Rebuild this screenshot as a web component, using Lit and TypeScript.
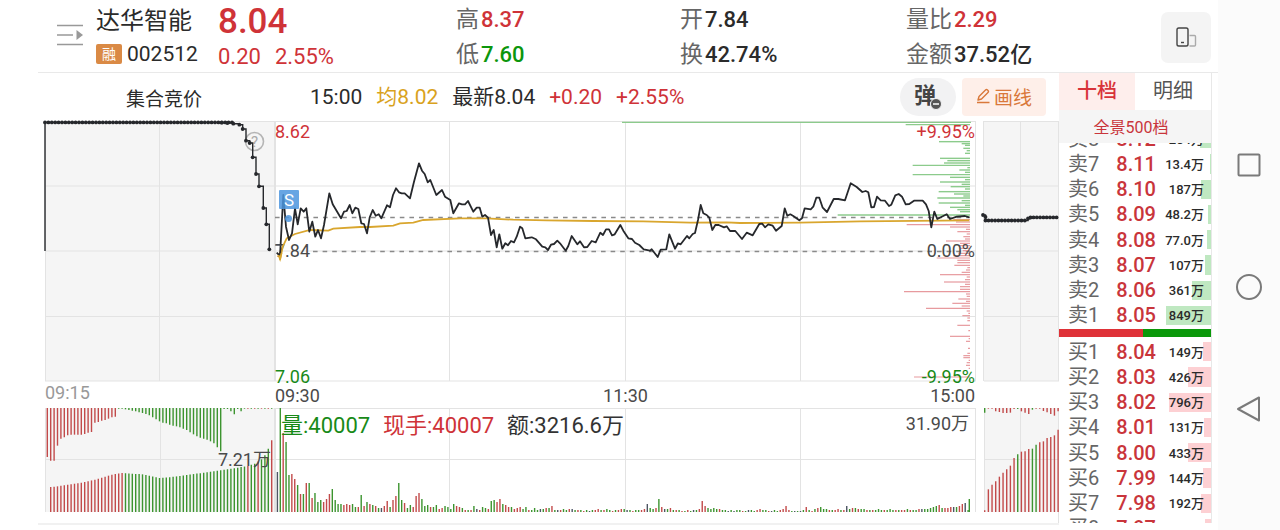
import { LitElement, html, svg, css } from "lit";
import { customElement, property, state } from "lit/decorators.js";
import { classMap } from "lit/directives/class-map.js";

type Point = [number, number];

/* The traces are sampled at three units per pixel from the plot's origin. */
const UNIT = 3;
const toPoints = (flat: number[], shift = 0, ox = 260, oy = 110): Point[] => {
  const out: Point[] = [];
  for (let i = 0; i < flat.length; i += 2) out.push([ox + (flat[i] + shift) / UNIT, oy + flat[i + 1] / UNIT]);
  return out;
};
const join = (pts: Point[]) => pts.map(([x, y]) => `${x.toFixed(1)},${y.toFixed(1)}`).join(" ");

const MORNING_A = [50,428,60,438,70,255,78,350,87,390,96,370,105,295,113,343,122,295,131,305,139,295,148,365,157,335,166,380,174,360,183,385,192,345,208,250,218,283,243,325,252,305,260,303,269,285,277,310,286,293,295,297,304,340,312,342,321,370,329,322,338,300,347,317,356,313,364,325,381,286,390,292,399,255,408,235,417,247,425,250,434,250,450,265,462,215,477,160,486,182,494,192,503,217,511,210,529,255,546,240,555,260,571,270,580,310,597,280,606,283,615,283,624,273,640,305,650,293,659,293,667,320,675,315,684,323];
const MORNING_B = [33,375,41,360,50,412,58,373,67,416,76,400,84,406,93,393,102,397,110,380,120,350,127,355,136,385,155,382,168,388,187,410,196,412,204,420,213,404,222,402,232,392,240,400,257,422,265,408,275,378,292,403,300,394,312,412,322,411,335,393,347,397,361,368,369,375,378,358,387,358,396,376,404,373,421,345,430,362,445,385,456,387,465,398,478,405,491,418,510,422,515,418,533,441,542,419,559,418,568,373,585,416,594,400,602,403,621,378,628,385,638,372,645,369,654,330,662,285,670,310,680,315,688,323,697,360,706,345,716,345];
const AFTERNOON = [12,352,20,349,30,363,46,363,66,387,80,368,98,376,118,342,127,341,135,352,145,343,158,347,168,362,185,348,194,295,202,317,211,313,220,318,238,331,246,325,254,295,272,298,280,290,289,263,298,263,308,293,321,306,341,267,355,267,375,271,392,220,410,231,427,246,437,243,445,247,454,292,462,291,471,260,482,271,495,272,507,288,514,284,526,256,536,252,546,260,557,283,568,282,582,272,608,272,618,283,626,303,634,352,643,305,652,327,680,313,690,327,710,320,735,318,748,322];
const PRICE = [...toPoints(MORNING_A), ...toPoints(MORNING_B, 660), ...toPoints(AFTERNOON, 1380)];

const AVERAGE = toPoints([60,450,68,410,80,385,105,372,150,360,205,362,220,356,300,351,330,351,400,347,420,340,460,338,490,330,600,325,680,325,760,329,860,331,1000,333,1150,334,1290,338,1400,337,1440,339,1620,338,1800,334,2128,331]);

const AUCTION_DROP = toPoints([575,38,592,39,610,41,628,44,638,57,648,92,659,99,668,142,678,192,687,229,700,294,709,343,718,418], 0, 30, 110);
const AUCTION: Point[] = [...Array.from({ length: 56 }, (_, i): Point => [45 + i * 3.4, 122.4]), ...AUCTION_DROP];

const CLOSING: Point[] = [[983, 215], [985.5, 217], [985.5, 220.5],
  ...Array.from({ length: 12 }, (_, i): Point => [988.5 + i * 3.3, 220.5]),
  [1028, 218.5], [1030.5, 217.5],
  ...Array.from({ length: 8 }, (_, i): Point => [1033.5 + i * 3.3, 217.4])];

const stepPath = (pts: Point[]) =>
  pts.slice(1).reduce((d, [x, y]) => `${d}H${x.toFixed(1)}V${y.toFixed(1)}`, `M${pts[0][0]} ${pts[0][1]}`);

/* Price distribution: row, left end. */
const CHIPS_UP = [44,557,95,657,101,725,106,735,115,730,122,740,130,735,145,660,152,682,159,672,166,578,173,742,180,718,187,735,194,578,202,690,209,735,216,660,223,725,230,692,237,735,245,656,252,702,258,730,264,652,272,725,279,656,286,735,292,690,299,712,305,720,315,353];
const CHIPS_DOWN = [329,700,336,708,344,560,351,690,358,738,365,712,372,740,380,730,387,735,393,678,400,720,407,715,415,722,422,728,430,715,437,700,444,650,451,712,458,712,466,703,473,742,480,738,487,725,494,660,501,740,509,735,516,672,523,735,530,720,538,720,545,552,552,738,559,740,567,715,574,738,580,697,588,725,595,618,603,740,610,745,617,727,624,742,632,742,646,712,662,745,679,690,686,746,694,738,715,744,730,742,737,730,743,730,751,746,758,740,766,738,775,746,801,582];

/* Minute volumes; the letter is the direction (g fall, r rise, k flat). */
const VOLUME = (
  "40k 104g 79r 70g 37g 38r 33r 27g 18r 18g 29r 29g 14r 19g 10g 12g 10r 13r 18r 23g 12g 8g 8g 7r 8r 7r 8g 5g 5r 17g 6r 10g 8r 7g 6r 4g 4k 6r 11r 5g 12r 16r 29g 12g 9r 4g 7g 5r 16r 19r 13g 6g 7g 5r 5g 7g 3r 4r 6g 5g 3g 8g 6r 5r 4g 2r 2g 2r 6g 3k 2r 5g 4g 3r 11g 12g 10r 13r 8g 7r 5r 5g 3r 4r 5r 3g 5g 2r 2g 4g 2g 3k 3g 4r 4g 6r 2g " +
  "2k 2r 3g 2g 3r 3k 2g 2r 2g 1r 2g 1k 2g 2r 3r 2g 2r 3g 2g 1r 2g 2r 3r 3g 2k 2g 1r 2g 2g 2r 3r 8k 4g 3g 4r 13g 5r 3k 3g 4r 2g 2r 2g 1r 1g 2r 1g 2k 2g 3r 11r 6r 4g 3g 4g 3g 3r 2g 2g 1k 2g 1k 2g 2g 1r 1g 2k 2g 1g 2r 3r 2g 2g 1r 1k 2g 1g 2r 3r 6r 2r 1g 1k 1g 1k 2g 5r 2g 1r 3g 4r 5g 3g 3g 2r 2g 2r 3r 2g 2r 6k 3g 4r 4g 3r 3g 3g 2r 2g 2r 2g 3g 2g 2r 2g 3g 2g 2r 2g 2r 2r 3g 2r 2g 2g 3r 3k 3g 3g 4g 5g 6g 7r 4g 4r 4r 5r 5k 5g 6r 8r 9k 2g"
).trim().split(" ").map((v) => ({ size: parseInt(v, 10), dir: v.slice(-1) }));

const AUCTION_TOP = [147,158,158,113,92,88,82,80,80,80,80,78,74,72,44,42,38,36,32,28,26,2,2,4,6,8,10,13,15,18,22,28,34,40,44,46,50,53,55,58,62,66,73,79,85,89,92,95,100,106,118,130,3,3,10,19,3,10,2,2,2,2,2,2,2,2,2];
const AUCTION_KEYS: Point[] = [[1, 75], [3, 77], [10, 88], [14, 97], [19, 112], [22, 117], [28, 113], [33, 102], [36, 104], [51, 125], [59, 138], [61, 145], [63, 158], [64, 170], [65, 190], [66, 215]];
const auctionSize = (i: number) => {
  const k = Math.max(1, AUCTION_KEYS.findIndex(([x]) => x >= i));
  const [x0, y0] = AUCTION_KEYS[k - 1];
  const [x1, y1] = AUCTION_KEYS[k];
  return y0 + ((i - x0) / (x1 - x0)) * (y1 - y0);
};
const CLOSE_TOP = [14,2,2,10,12,15,15,14,3,3,10,14,18,5,2,2,9,13,18,23,10];
const CLOSE_SIZE = [5,68,82,92,106,118,128,139,162,173,181,182,189,190,202,209,212,222,225,230,247];

@customElement("minute-chart")
export class MinuteChart extends LitElement {
  static styles = css`
    :host { display: block; }
    svg { display: block; width: 100%; height: auto; }
    text { font: 18px Roboto, "Noto Sans CJK SC", sans-serif; fill: #4a4a4a; }
    .end { text-anchor: end; }
    .mid { text-anchor: middle; }
    .muted { fill: #999; }
    .up { fill: #cf3338; }
    .down { fill: #188a18; }
    .legend { font-size: 22px; }
    .dark { fill: #333; }
    .side { fill: #f5f5f5; }
    .grid { stroke: #e3e3e3; fill: none; }
    .ref { stroke: #8a8a8a; stroke-width: 1.4; stroke-dasharray: 4.6 5; }
    .price { fill: none; stroke: #26282c; stroke-width: 1.8; stroke-linejoin: round; }
    .step { fill: none; stroke: #26282c; stroke-width: 1.4; }
    .avg { fill: none; stroke: #d9a62e; stroke-width: 1.8; }
    .dot { fill: #26282c; }
    .g { stroke: #3c942f; }
    .r { stroke: #c24a4a; }
    .k { stroke: #4d5563; }
    .bars { stroke-width: 1.4; }
    .chip-up { stroke: #8ccb8c; stroke-width: 1.4; }
    .chip-down { stroke: #e79a9e; stroke-width: 1.2; }
    .help { fill: none; stroke: #b5b5b5; stroke-width: 1.6; }
    .help-mark { font-size: 15px; fill: #aaa; }
    .sell { fill: #4c95de; fill-opacity: 0.85; }
    .sell-mark { font-size: 17px; fill: #fff; }
  `;

  private vbar(x: number, from: number, to: number, kind: string) {
    return svg`<line class=${kind} x1=${x} x2=${x} y1=${from} y2=${to}></line>`;
  }

  private chips(rows: number[], kind: string) {
    const out = [];
    for (let i = 0; i < rows.length; i += 2) {
      const y = 110 + rows[i] / UNIT;
      out.push(svg`<line class=${kind} x1=${720 + rows[i + 1] / UNIT} x2="970" y1=${y} y2=${y}></line>`);
    }
    return out;
  }

  render() {
    const base = 512;
    return html`
      <svg viewBox="38 118 1021 405" role="img" aria-label="分时走势">
        <rect class="side" x="45" y="121" width="230" height="260"></rect>
        <rect class="side" x="45" y="408" width="230" height="104"></rect>
        <rect class="side" x="984" y="121" width="75" height="260"></rect>
        <rect class="side" x="984" y="408" width="75" height="104"></rect>
        <path class="grid" d="M45 121.5H976M45 186H976M45 251H976M45 316.5H976M45 381H976
          M45.5 121V381M159.5 121V381M274.5 121V381M275.5 121V381M449.5 121V381M625.5 121V381M800.5 121V381M975.5 121V381
          M984 121.5H1059M984 186H1059M984 251H1059M984 316.5H1059M984 381H1059M983.5 121V381M1020.5 121V381M1058.5 121V381
          M276 408.5H976M45 459.5H976M984 459.5H1059
          M45.5 408V512M160.5 408V512M274.5 408V512M275.5 408V512M449.5 408V512M625.5 408V512M800.5 408V512M975.5 408V512
          M984.5 408V512M1020.5 408V512M1058.5 408V523"></path>

        <line class="ref" x1="275" x2="970" y1="217.5" y2="217.5"></line>
        <line class="ref" x1="313" x2="970" y1="251.5" y2="251.5"></line>
        <line class="chip-up" x1="622" x2="971" y1="122.4" y2="122.4"></line>
        ${this.chips(CHIPS_UP, "chip-up")}
        ${this.chips(CHIPS_DOWN, "chip-down")}

        <circle class="help" cx="254.500" cy="141.500" r="9"></circle>
        <text class="mid help-mark" x="254.500" y="147">?</text>

        <text class="up" x="275" y="138">8.62</text>
        <text x="275" y="257">7.84</text>
        <text class="down" x="275" y="383">7.06</text>
        <text class="end up" x="975" y="138">+9.95%</text>
        <text class="end" x="975" y="257">0.00%</text>
        <text class="end down" x="975" y="383">-9.95%</text>

        <polyline class="avg" points=${join(AVERAGE)}></polyline>
        <polyline class="price" points=${join(PRICE)}></polyline>
        <path class="avg" d="M278.500 255L280 259L281.500 253"></path>
        <line class="k" x1="275" x2="281" y1="245" y2="245"></line>

        <rect class="sell" x="279" y="190" width="20" height="19" rx="1"></rect>
        <circle class="sell" cx="288.500" cy="218.500" r="3.5"></circle>
        <text class="mid sell-mark" x="289" y="206">S</text>

        <line class="step" x1="45" x2="45" y1="122" y2="251"></line>
        <path class="step" d=${stepPath(AUCTION)}></path>
        ${AUCTION.map(([x, y]) => svg`<circle class="dot" cx=${x} cy=${y} r="1.900"></circle>`)}
        <path class="step" d=${stepPath(CLOSING)}></path>
        ${CLOSING.map(([x, y]) => svg`<circle class="dot" cx=${x} cy=${y} r="1.900"></circle>`)}

        <text class="muted" x="45" y="399">09:15</text>
        <text x="275" y="402">09:30</text>
        <text class="mid" x="625.500" y="402">11:30</text>
        <text class="end" x="975" y="402">15:00</text>

        <g class="bars">
          ${AUCTION_TOP.map((v, i) => this.vbar(47.3 + i * 3.4, 408, 408 + v / UNIT, i < 21 || (i > 57 && i % 2) ? "r" : "g"))}
          ${AUCTION_TOP.map((_, i) => (i ? this.vbar(47.3 + i * 3.4, base - auctionSize(i) / UNIT, base, i < 23 || i === 59 || i === 62 || i === 66 ? "r" : "g") : null))}
          ${VOLUME.map((v, i) => this.vbar(277.4 + i * 2.89, base - v.size, base, v.dir))}
          ${this.vbar(969.3, base - 13, base, "g")}
          ${CLOSE_TOP.map((v, i) => this.vbar(984.7 + i * 3.67, 408, 408 + v / UNIT, i === 0 || i === 13 || i === 9 ? "g" : "r"))}
          ${CLOSE_SIZE.map((v, i) => this.vbar(984.7 + i * 3.67, base - v / UNIT, base, i === 9 || i === 13 || i === 14 ? "g" : "r"))}
        </g>

        <text class="end" x="271" y="466">7.21万</text>
        <text class="legend down" x="281" y="433">量:40007</text>
        <text class="legend up" x="383" y="433">现手:40007</text>
        <text class="legend dark" x="507" y="433">额:3216.6万</text>
        <text class="end" x="969" y="430">31.90万</text>
      </svg>
    `;
  }
}

interface Level { name: string; price: string; size: string; value: number; }
const level = (name: string, price: string, size: string): Level => ({ name, price, size: `${size}万`, value: parseFloat(size) });

const ASKS = [
  level("卖8", "8.12", "204"), level("卖7", "8.11", "13.4"), level("卖6", "8.10", "187"), level("卖5", "8.09", "48.2"),
  level("卖4", "8.08", "77.0"), level("卖3", "8.07", "107"), level("卖2", "8.06", "361"), level("卖1", "8.05", "849"),
];
const BIDS = [
  level("买1", "8.04", "149"), level("买2", "8.03", "426"), level("买3", "8.02", "796"), level("买4", "8.01", "131"),
  level("买5", "8.00", "433"), level("买6", "7.99", "144"), level("买7", "7.98", "192"), level("买8", "7.97", "120"),
];

@customElement("order-book")
export class OrderBook extends LitElement {
  static styles = css`
    :host { display: flex; flex-direction: column; border-right: 1px solid #e8e8e8; font-family: Roboto, "Noto Sans CJK SC", sans-serif; }
    button { border: 0; padding: 0; margin: 0; font: inherit; cursor: pointer; background: none; }
    .tabs { display: grid; grid-template-columns: 1fr 1fr; height: 37px; }
    .tab { font-size: 20px; line-height: 37px; color: #555; }
    .tab.on { background: #feeeec; color: #d8333a; font-weight: 500; }
    .all { height: 33px; padding-right: 8px; font-size: 16px; line-height: 36px; background: #f5f5f5; color: #c9353b; }
    .half { display: flex; flex-direction: column; overflow: hidden; }
    .asks { justify-content: flex-end; height: 185px; }
    .bids { height: 184px; }
    table { flex: none; width: 100%; height: 202px; border-collapse: collapse; }
    th, td { padding: 0; line-height: 24px; }
    th { width: 48px; padding-left: 9px; text-align: left; font-size: 20px; font-weight: 400; color: #666; }
    .price { width: 40px; font-size: 20px; font-weight: 500; color: #c9353b; text-align: right; }
    .size { position: relative; padding-right: 7px; font-size: 13px; font-weight: 500; color: #2b2b2b; text-align: right; }
    .text { position: relative; top: 1px; }
    .fill { position: absolute; right: 0; top: 3px; bottom: 3px; background: #bfe8c1; }
    .bids .fill { background: #fdd0d3; }
    .ratio { display: flex; height: 8px; margin: 1px 0 2px; }
    .buying { flex: 55; background: #df3238; }
    .selling { flex: 45; background: #0a980a; }
  `;

  @state() private tab = "十档";

  private rows(levels: Level[]) {
    return html`<table><tbody>${levels.map((l) => html`
      <tr>
        <th scope="row">${l.name}</th>
        <td class="price">${l.price}</td>
        <td class="size"><span class="fill" style="width:${Math.round((l.value / 849) * 45)}px"></span><span class="text">${l.size}</span></td>
      </tr>`)}</tbody></table>`;
  }

  render() {
    return html`
      <div class="tabs" role="tablist">
        ${["十档", "明细"].map((t) => html`<button role="tab" aria-selected=${t === this.tab} class=${classMap({ tab: true, on: t === this.tab })} @click=${() => (this.tab = t)}>${t}</button>`)}
      </div>
      <button class="all">全景500档</button>
      <div class="half asks">${this.rows(ASKS)}</div>
      <div class="ratio"><div class="buying"></div><div class="selling"></div></div>
      <div class="half bids">${this.rows(BIDS)}</div>
    `;
  }
}

@customElement("quote-item")
export class QuoteItem extends LitElement {
  static styles = css`
    :host { display: block; color: #2b2b2b; font-size: 22px; font-weight: 500; line-height: 35px; white-space: nowrap; }
    .label { margin-right: 2px; font-size: 23px; font-weight: 400; color: #666; }
    .up { color: #cf3338; }
    .down { color: #0c960c; }
  `;
  @property() label = "";
  @property() value = "";
  @property() tone = "";
  render() {
    return html`<span class="label">${this.label}</span><span class=${this.tone}>${this.value}</span>`;
  }
}

@customElement("app-root")
export class AppRoot extends LitElement {
  static styles = css`
    :host { display: grid; grid-template-columns: minmax(0, 1fr) 62px; min-height: 100vh; background: #fff; overflow: hidden; font-family: Roboto, "Noto Sans CJK SC", sans-serif; color: #2b2b2b; }
    button { border: 0; padding: 0; margin: 0; font: inherit; color: inherit; background: none; cursor: pointer; }
    svg { display: block; }
    main { padding-left: 38px; }
    header { display: grid; grid-template-columns: 58px 122px 238px 224px 226px 1fr 50px; height: 72px; padding-right: 7px; border-bottom: 1px solid #e9e9e9; }
    .menu { align-self: center; justify-self: start; padding-left: 18px; }
    .menu svg { margin-top: -4px; }
    .name { margin: 0; padding-top: 4px; font-size: 24px; line-height: 35px; font-weight: 400; white-space: nowrap; }
    .code { display: flex; align-items: center; gap: 5px; font-size: 21px; line-height: 30px; }
    .tag { width: 26px; border-radius: 2px; background: #da8a45; color: #fff; font-size: 14px; line-height: 20px; text-align: center; }
    .last { padding-top: 3px; font-size: 35px; line-height: 37px; font-weight: 500; color: #cf3338; }
    .change { display: flex; gap: 14px; font-size: 22px; line-height: 34px; color: #cf3338; }
    .pair { padding-top: 2px; }
    .switch { display: grid; place-items: center; align-self: center; height: 51px; border-radius: 7px; background: #f4f4f4; }
    .body { display: grid; grid-template-columns: minmax(0, 1fr) 153px; align-items: start; padding-right: 6px; }
    .chart { border-bottom: 2px solid #f1f1f1; }
    .bar { display: grid; grid-template-columns: 272px 1fr auto; align-items: center; height: 45px; padding: 3px 13px 0 0; box-sizing: border-box; }
    .auction { padding-left: 88px; font-size: 19px; }
    .stats { display: flex; gap: 14px; font-size: 21px; line-height: 32px; white-space: nowrap; }
    .avg { color: #d9a21d; }
    .up { color: #cf3338; }
    .tools { display: flex; gap: 6px; }
    .bullet { display: flex; align-items: center; justify-content: center; width: 56px; height: 38px; border-radius: 19px; background: #f2f2f3; color: #444; font-size: 22px; line-height: 32px; font-weight: 700; padding-bottom: 3px; }
    .badge { margin: 16px 0 0 -6px; }
    .draw { display: flex; align-items: center; justify-content: center; gap: 3px; width: 84px; height: 38px; padding-bottom: 2px; border-radius: 4px; background: #feefe9; color: #d9783a; font-size: 19px; }
    nav { display: flex; flex-direction: column; align-items: center; gap: 96px; padding-top: 152px; background: #fbfbfb; }
    nav svg { fill: none; stroke: #7a7a7a; stroke-width: 2; stroke-linejoin: round; }
  `;

  render() {
    return html`
      <main>
        <header>
          <button class="menu" aria-label="列表">
            <svg width="28" height="24" viewBox="0 0 28 24" fill="none" stroke="#999" stroke-width="1.600">
              <path d="M1 2.500H27M1 12H17M1 21.500H27"></path><path d="M20.500 7L27 12L20.500 17Z" fill="#999" stroke="none"></path>
            </svg>
          </button>
          <div>
            <h1 class="name">达华智能</h1>
            <div class="code"><span class="tag">融</span><span>002512</span></div>
          </div>
          <div>
            <div class="last">8.04</div>
            <div class="change"><span>0.20</span><span>2.55%</span></div>
          </div>
          <div class="pair">
            <quote-item label="高" value="8.37" tone="up"></quote-item>
            <quote-item label="低" value="7.60" tone="down"></quote-item>
          </div>
          <div class="pair">
            <quote-item label="开" value="7.84"></quote-item>
            <quote-item label="换" value="42.74%"></quote-item>
          </div>
          <div class="pair">
            <quote-item label="量比" value="2.29" tone="up"></quote-item>
            <quote-item label="金额" value="37.52亿"></quote-item>
          </div>
          <button class="switch" aria-label="切换竖屏">
            <svg width="22" height="22" viewBox="0 0 22 22" fill="none" stroke="#444" stroke-width="1.4">
              <rect x="2" y="2" width="11" height="18" rx="1.800"></rect><path d="M6 16.500H9"></path>
              <path d="M14.500 9.500H19.500Q20.500 9.500 20.500 10.500V19Q20.500 20 19.500 20H14.500" stroke="#aaa"></path>
            </svg>
          </button>
        </header>
        <div class="body">
          <section class="chart">
            <div class="bar">
              <span class="auction">集合竞价</span>
              <div class="stats">
                <span>15:00</span><span class="avg">均8.02</span><span>最新8.04</span><span class="up">+0.20</span><span class="up">+2.55%</span>
              </div>
              <div class="tools">
                <button class="bullet">弹<svg class="badge" width="12" height="12" viewBox="0 0 12 12"><circle cx="6" cy="6" r="5.500" fill="#555" stroke="#f2f2f3"></circle><path d="M3 6H9" stroke="#fff" stroke-width="1.500"></path></svg></button>
                <button class="draw"><svg width="15" height="16" viewBox="0 0 15 16" fill="none" stroke="#d9783a" stroke-width="1.400" stroke-linejoin="round"><path d="M2 12L3 8.500L9.500 2Q10.500 1 11.500 2L12 2.500Q13 3.500 12 4.500L5.500 11ZM1 14.500H13.500"></path></svg>画线</button>
              </div>
            </div>
            <minute-chart></minute-chart>
          </section>
          <order-book></order-book>
        </div>
      </main>
      <nav aria-label="系统导航">
        <button aria-label="最近任务"><svg width="26" height="26" viewBox="0 0 26 26"><rect x="2.500" y="2.500" width="21" height="21" rx="1"></rect></svg></button>
        <button aria-label="主页"><svg width="26" height="26" viewBox="0 0 26 26"><circle cx="13" cy="13" r="12"></circle></svg></button>
        <button aria-label="返回"><svg width="26" height="26" viewBox="0 0 26 26"><path d="M2 13L23 1.500V24.500Z"></path></svg></button>
      </nav>
    `;
  }
}
